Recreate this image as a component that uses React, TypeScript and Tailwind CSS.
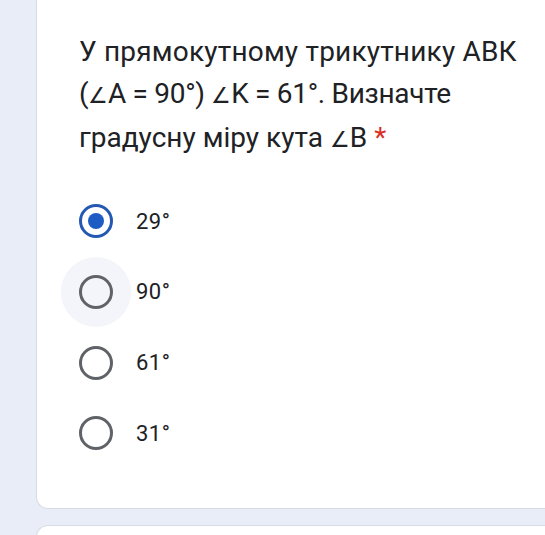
import React from "react";

const options = ["29°", "90°", "61°", "31°"];

function Radio({ checked }: { checked: boolean }) {
  if (checked) {
    return (
      <span className="flex h-[34px] w-[34px] items-center justify-center rounded-full border-[3px] border-[#2458b3]">
        <span className="h-[16px] w-[16px] rounded-full bg-[#1f5bc4]" />
      </span>
    );
  }
  return <span className="block h-[34px] w-[34px] rounded-full border-[3px] border-[#5f6368]" />;
}

export default function App() {
  return (
    <div
      className="h-[535px] w-[545px] overflow-hidden bg-[#e8edf8]"
      style={{ fontFamily: "Roboto, 'Noto Sans', sans-serif" }}
    >
      {/* Question card */}
      <div className="ml-[36px] h-[509px] rounded-bl-[12px] border-b border-l border-[#d6dbe4] bg-white pl-[42px] pt-[31px]">
        <div className="whitespace-nowrap text-[28px] leading-[42px] text-[#202124]">
          <span className="tracking-[0.2px]">У прямокутному трикутнику АВК</span>
          <br />
          <span className="tracking-[-0.3px]">
            (<span className="text-[22px]">∠</span>А = 90°) <span className="text-[22px]">∠</span>K = 61°. Визначте
          </span>
          <br />
          градусну міру кута <span className="text-[22px]">∠</span>В{" "}
          <span className="text-[#d93025]">*</span>
        </div>

        <div className="mt-[25px] flex flex-col">
          {options.map((o, i) => (
            <div key={o} className="flex h-[70.67px] items-center">
              <div className="relative flex h-[34px] w-[34px] items-center justify-center">
                {i === 1 && (
                  <span className="absolute left-[-18px] top-[-18px] h-[70px] w-[70px] rounded-full bg-[#f3f5fa]" />
                )}
                <span className="relative">
                  <Radio checked={i === 0} />
                </span>
              </div>
              <span className="ml-[23px] text-[22px] tracking-[0.5px] text-[#202124]">{o}</span>
            </div>
          ))}
        </div>
      </div>

      {/* Next card edge */}
      <div className="ml-[36px] mt-[16px] h-[40px] rounded-tl-[12px] border-l border-t border-[#d6dbe4] bg-white" />
    </div>
  );
}
